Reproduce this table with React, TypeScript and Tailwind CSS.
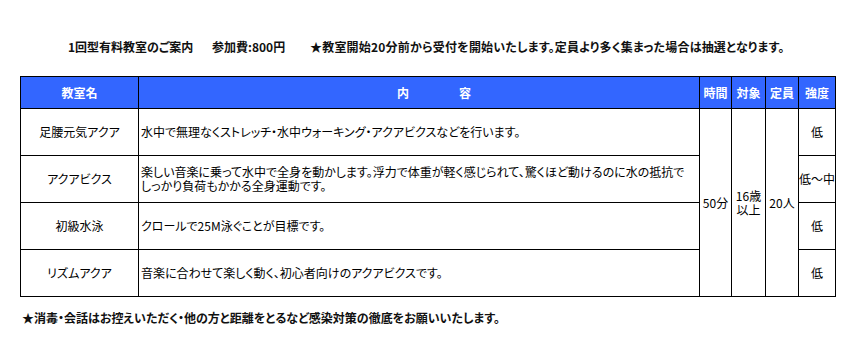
const classes = [
  {
    name: "足腰元気アクア",
    lines: ["水中で無理なくストレッチ・水中ウォーキング・アクアビクスなどを行います。"],
    level: "低",
  },
  {
    name: "アクアビクス",
    lines: [
      "楽しい音楽に乗って水中で全身を動かします。浮力で体重が軽く感じられて、驚くほど動けるのに水の抵抗で",
      "しっかり負荷もかかる全身運動です。",
    ],
    level: "低〜中",
  },
  {
    name: "初級水泳",
    lines: ["クロールで25M泳ぐことが目標です。"],
    level: "低",
  },
  {
    name: "リズムアクア",
    lines: ["音楽に合わせて楽しく動く、初心者向けのアクアビクスです。"],
    level: "低",
  },
];

const font = { fontFamily: '"Noto Sans CJK JP", "Liberation Sans", sans-serif', fontFeatureSettings: '"palt"' };

export default function App() {
  return (
    <div className="h-[364px] w-[860px] overflow-hidden bg-white text-black" style={font}>
      <div className="flex pl-[68px] pt-[39px] text-[12px] font-bold leading-[16px] text-[#111]">
        <span className="w-[144px] shrink-0">1回型有料教室のご案内</span>
        <span className="w-[98px] shrink-0">参加費:800円</span>
        <span className="whitespace-nowrap tracking-[0.2px]">★教室開始20分前から受付を開始いたします。定員より多く集まった場合は抽選となります。</span>
      </div>

      <div className="px-[20px] pt-[21px]">
        <table className="w-[815px] table-fixed border-collapse text-[12px] leading-[14px]">
          <colgroup>
            <col className="w-[118px]" />
            <col className="w-[561px]" />
            <col className="w-[32px]" />
            <col className="w-[34px]" />
            <col className="w-[33px]" />
            <col className="w-[37px]" />
          </colgroup>
          <thead>
            <tr className="h-[32px] bg-[#3366ff] font-bold text-white">
              <th className="border border-black font-bold">教室名</th>
              <th className="border border-black font-bold">
                <span className="pl-[30px]">内</span>
                <span className="pl-[50px]">容</span>
              </th>
              <th className="border border-black px-0 font-bold">時間</th>
              <th className="border border-black px-0 font-bold">対象</th>
              <th className="border border-black px-0 font-bold">定員</th>
              <th className="border border-black px-0 font-bold">強度</th>
            </tr>
          </thead>
          <tbody>
            {classes.map((c, i) => (
              <tr key={c.name} className="h-[47px]">
                <td className="border border-black text-center">{c.name}</td>
                <td className="border border-black pl-[2px] whitespace-nowrap">
                  {c.lines.map((line) => (
                    <div key={line}>{line}</div>
                  ))}
                </td>
                {i === 0 && (
                  <>
                    <td rowSpan={4} className="border border-black px-0 text-center">50分</td>
                    <td rowSpan={4} className="border border-black px-0 text-center">
                      16歳
                      <br />
                      以上
                    </td>
                    <td rowSpan={4} className="border border-black px-0 text-center">20人</td>
                  </>
                )}
                <td className="border border-black px-0 text-center whitespace-nowrap">{c.level}</td>
              </tr>
            ))}
          </tbody>
        </table>
      </div>

      <p className="pl-[22px] pt-[13px] text-[12px] font-bold leading-[16px] text-[#111]">
        ★消毒・会話はお控えいただく・他の方と距離をとるなど感染対策の徹底をお願いいたします。
      </p>
    </div>
  );
}
